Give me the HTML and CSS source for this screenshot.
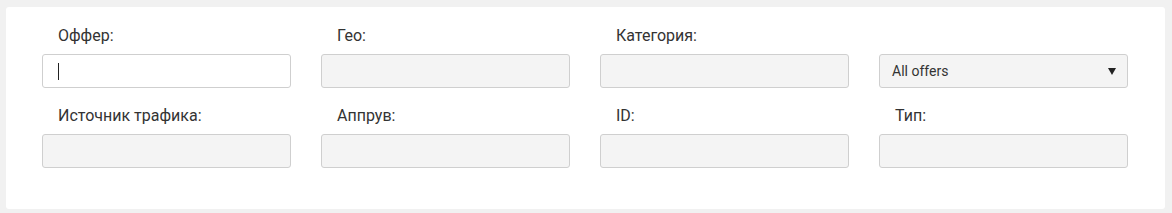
FILE: index.html
```html
<!DOCTYPE html>
<html lang="ru">
<head>
<meta charset="utf-8">
<link rel="stylesheet" href="styles.css">
</head>
<body>
<div class="card">
  <div class="grid">
    <div class="field">
      <div class="label">Оффер:</div>
      <div class="input input-active"><span class="caret"></span></div>
    </div>
    <div class="field">
      <div class="label">Гео:</div>
      <div class="input"></div>
    </div>
    <div class="field">
      <div class="label">Категория:</div>
      <div class="input"></div>
    </div>
    <div class="field">
      <div class="label"></div>
      <div class="input select">
        <span class="select-text">All offers</span>
        <span class="arrow"></span>
      </div>
    </div>
    <div class="field">
      <div class="label">Источник трафика:</div>
      <div class="input"></div>
    </div>
    <div class="field">
      <div class="label">Аппрув:</div>
      <div class="input"></div>
    </div>
    <div class="field">
      <div class="label">ID:</div>
      <div class="input"></div>
    </div>
    <div class="field">
      <div class="label">Тип:</div>
      <div class="input"></div>
    </div>
  </div>
</div>
</body>
</html>
```

FILE: styles.css
```css
html, body {
  margin: 0;
  padding: 0;
}
body {
  background: #f1f1f1;
  font-family: Roboto, "Liberation Sans", Arial, sans-serif;
  color: #333;
  padding: 7px 7px 4px 6px;
}
.card {
  background: #fff;
  border-radius: 3px;
  padding: 20px 37px 41px 36px;
  height: 202px;
  box-sizing: border-box;
}
.grid {
  display: grid;
  grid-template-columns: repeat(4, 249px);
  column-gap: 30px;
  row-gap: 19px;
}
.field {
  display: flex;
  flex-direction: column;
}
.label {
  height: 18px;
  line-height: 18px;
  font-size: 16px;
  padding-left: 16px;
  margin-bottom: 9px;
  color: #333;
}
.input {
  height: 34px;
  box-sizing: border-box;
  border: 1px solid #cfcfcf;
  border-radius: 3px;
  background: #f4f4f4;
  display: flex;
  align-items: center;
}
.input-active {
  background: #fff;
  padding-left: 15px;
}
.caret {
  width: 1px;
  height: 17px;
  background: #222;
}
.select {
  padding: 0 11px 0 12px;
  justify-content: space-between;
}
.select-text {
  font-size: 14px;
  color: #333;
}
.arrow {
  width: 0;
  height: 0;
  border-left: 4px solid transparent;
  border-right: 4px solid transparent;
  border-top: 7px solid #222;
}
```
